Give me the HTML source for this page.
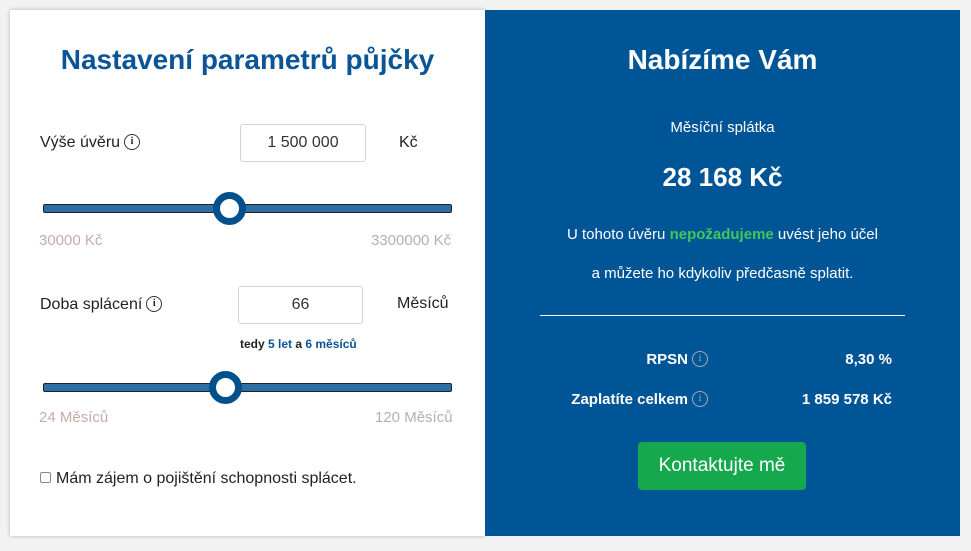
<!DOCTYPE html>
<html><head><meta charset="utf-8"><style>
*{margin:0;padding:0;box-sizing:border-box}
body{width:971px;height:551px;background:#f2f2f2;font-family:"Liberation Sans",sans-serif;position:relative;overflow:hidden}
.l{position:absolute;left:10px;top:10px;width:475px;height:526px;background:#fff;box-shadow:0 0 4px rgba(0,0,0,.25)}
.r{position:absolute;left:485px;top:10px;width:475px;height:526px;background:#005596;color:#fff}
.a{position:absolute;white-space:nowrap;line-height:20px}
.box{position:absolute;border:1px solid #d5d5d5;border-radius:3px;text-align:center;font-size:16px;color:#333}
.track{position:absolute;height:9px;background:#2c6fa5;border:1px solid #222;border-radius:2px}
.knob{position:absolute;width:33px;height:33px;border-radius:50%;background:#fff;border:7px solid #00508c}
.i{display:inline-block;width:16px;height:16px;border:1.5px solid #333;border-radius:50%;font-size:10px;text-align:center;line-height:13px;font-weight:bold;vertical-align:middle;position:relative;top:-1px;margin-left:4px;font-family:"Liberation Serif",serif}
.iw{border-color:#aab;color:#aab;font-weight:normal}
</style></head><body>
<div class="l">
<div class="a" style="left:0;width:475px;text-align:center;top:35px;font-size:28px;line-height:30px;font-weight:bold;color:#0a5597">Nastavení parametrů půjčky</div>
<div class="a" style="left:30px;top:123px;font-size:16px;color:#222">Výše úvěru<span class="i">i</span></div>
<div class="box" style="left:230px;top:114px;width:126px;height:38px;line-height:36px">1 500 000</div>
<div class="a" style="left:389px;top:123px;font-size:16px;color:#222">Kč</div>
<div class="track" style="left:33px;top:194px;width:409px"></div>
<div class="knob" style="left:203px;top:182px"></div>
<div class="a" style="left:29px;top:221px;font-size:15px;color:#c9aaa8">30000 Kč</div>
<div class="a" style="left:361px;top:221px;font-size:15px;color:#b0b0b8">3300000 Kč</div>
<div class="a" style="left:30px;top:285px;font-size:16px;color:#222">Doba splácení<span class="i">i</span></div>
<div class="box" style="left:228px;top:276px;width:125px;height:38px;line-height:36px">66</div>
<div class="a" style="left:387px;top:284px;font-size:16px;color:#222">Měsíců</div>
<div class="a" style="left:230px;top:324px;font-size:12px;font-weight:bold;color:#222">tedy <span style="color:#0a5597">5 let</span> a <span style="color:#0a5597">6 měsíců</span></div>
<div class="track" style="left:33px;top:373px;width:409px"></div>
<div class="knob" style="left:199px;top:361px"></div>
<div class="a" style="left:29px;top:398px;font-size:15px;color:#c9aaa8">24 Měsíců</div>
<div class="a" style="left:365px;top:398px;font-size:15px;color:#b0b0b8">120 Měsíců</div>
<div class="a" style="left:30px;top:459px;font-size:16px;color:#222"><span style="display:inline-block;width:11px;height:11px;border:1px solid #888;border-radius:2px;margin-right:5px;vertical-align:0"></span>Mám zájem o pojištění schopnosti splácet.</div>
</div>
<div class="r">
<div class="a" style="left:0;width:475px;text-align:center;top:35px;font-size:28px;line-height:30px;font-weight:bold">Nabízíme Vám</div>
<div class="a" style="left:0;width:475px;text-align:center;top:108px;font-size:15px">Měsíční splátka</div>
<div class="a" style="left:0;width:475px;text-align:center;top:153px;font-size:26px;line-height:28px;font-weight:bold">28 168 Kč</div>
<div class="a" style="left:0;width:475px;text-align:center;top:215px;font-size:15px">U tohoto úvěru <b style="color:#3ec95a">nepožadujeme</b> uvést jeho účel</div>
<div class="a" style="left:0;width:475px;text-align:center;top:254px;font-size:15px">a můžete ho kdykoliv předčasně splatit.</div>
<div class="a" style="left:55px;top:305px;width:365px;height:1px;background:#fff"></div>
<div class="a" style="right:252px;top:340px;font-size:15px;font-weight:bold">RPSN<span class="i iw">i</span></div>
<div class="a" style="right:68px;top:340px;font-size:15px;font-weight:bold">8,30 %</div>
<div class="a" style="right:252px;top:380px;font-size:15px;font-weight:bold">Zaplatíte celkem<span class="i iw">i</span></div>
<div class="a" style="right:68px;top:380px;font-size:15px;font-weight:bold">1 859 578 Kč</div>
<div class="a" style="left:153px;top:432px;width:168px;height:48px;background:#16a84c;border-radius:4px;text-align:center;line-height:48px;font-size:19px">Kontaktujte mě</div>
</div>
</body></html>
